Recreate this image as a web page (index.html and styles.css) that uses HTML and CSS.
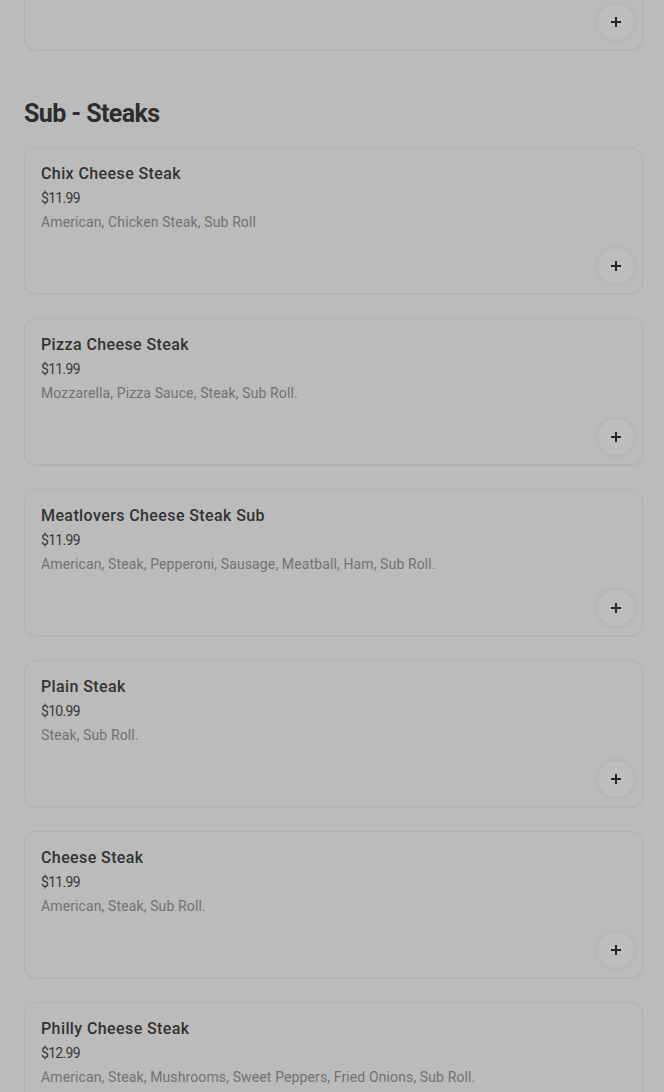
FILE: index.html
```html
<!DOCTYPE html>
<html lang="en">
  <head>
    <meta charset="UTF-8" />
    <meta name="viewport" content="width=device-width, initial-scale=1.0" />
    <title>Sub - Steaks</title>
    <link rel="stylesheet" href="styles.css">
  </head>
  <body>
    <div class="menu">
      <div class="item-list item-list-cut">
        <div class="item">
          <div class="item-text"></div>
          <div class="item-actions">
            <button class="add-btn" aria-label="Add">
              <svg viewBox="0 0 12 12" width="12" height="12"><path d="M6 1v10M1 6h10" /></svg>
            </button>
          </div>
        </div>
      </div>

      <h2 class="section-title">Sub - Steaks</h2>
      <div class="item-list">
        <div class="item">
          <div class="item-text">
            <h3 class="item-name">Chix Cheese Steak</h3>
            <p class="item-price">$11.99</p>
            <p class="item-desc">American, Chicken Steak, Sub Roll</p>
          </div>
          <div class="item-actions">
            <button class="add-btn" aria-label="Add">
              <svg viewBox="0 0 12 12" width="12" height="12"><path d="M6 1v10M1 6h10" /></svg>
            </button>
          </div>
        </div>
        <div class="item">
          <div class="item-text">
            <h3 class="item-name">Pizza Cheese Steak</h3>
            <p class="item-price">$11.99</p>
            <p class="item-desc">Mozzarella, Pizza Sauce, Steak, Sub Roll.</p>
          </div>
          <div class="item-actions">
            <button class="add-btn" aria-label="Add">
              <svg viewBox="0 0 12 12" width="12" height="12"><path d="M6 1v10M1 6h10" /></svg>
            </button>
          </div>
        </div>
        <div class="item">
          <div class="item-text">
            <h3 class="item-name">Meatlovers Cheese Steak Sub</h3>
            <p class="item-price">$11.99</p>
            <p class="item-desc">American, Steak, Pepperoni, Sausage, Meatball, Ham, Sub Roll.</p>
          </div>
          <div class="item-actions">
            <button class="add-btn" aria-label="Add">
              <svg viewBox="0 0 12 12" width="12" height="12"><path d="M6 1v10M1 6h10" /></svg>
            </button>
          </div>
        </div>
        <div class="item">
          <div class="item-text">
            <h3 class="item-name">Plain Steak</h3>
            <p class="item-price">$10.99</p>
            <p class="item-desc">Steak, Sub Roll.</p>
          </div>
          <div class="item-actions">
            <button class="add-btn" aria-label="Add">
              <svg viewBox="0 0 12 12" width="12" height="12"><path d="M6 1v10M1 6h10" /></svg>
            </button>
          </div>
        </div>
        <div class="item">
          <div class="item-text">
            <h3 class="item-name">Cheese Steak</h3>
            <p class="item-price">$11.99</p>
            <p class="item-desc">American, Steak, Sub Roll.</p>
          </div>
          <div class="item-actions">
            <button class="add-btn" aria-label="Add">
              <svg viewBox="0 0 12 12" width="12" height="12"><path d="M6 1v10M1 6h10" /></svg>
            </button>
          </div>
        </div>
        <div class="item">
          <div class="item-text">
            <h3 class="item-name">Philly Cheese Steak</h3>
            <p class="item-price">$12.99</p>
            <p class="item-desc">American, Steak, Mushrooms, Sweet Peppers, Fried Onions, Sub Roll.</p>
          </div>
          <div class="item-actions">
            <button class="add-btn" aria-label="Add">
              <svg viewBox="0 0 12 12" width="12" height="12"><path d="M6 1v10M1 6h10" /></svg>
            </button>
          </div>
        </div>
      </div>
    </div>
  </body>
</html>
```

FILE: styles.css
```css
* {
  margin: 0;
  padding: 0;
  box-sizing: border-box;
}
html,
body {
  height: 100%;
}
body {
  overflow: hidden;
  background: #bbbbbb;
  font-family: Roboto, "Liberation Sans", sans-serif;
  color: #333;
}
.menu {
  padding: 0 21px 0 24px;
}
.item-list {
  display: flex;
  flex-direction: column;
  gap: 24px;
}
.item-list-cut {
  margin-top: -97px;
}
.section-title {
  margin: 48px 0 17px;
  font-size: 25px;
  line-height: 32px;
  font-weight: 700;
  letter-spacing: -0.6px;
  color: #2d2d2d;
}
.item {
  display: flex;
  flex-direction: column;
  height: 147px;
  padding: 16px 8px 9px 16px;
  border: 1px solid #b1b1b1;
  border-radius: 12px;
  box-shadow: 0 1px 2px rgba(0, 0, 0, 0.05);
}
.item-text {
  display: flex;
  flex-direction: column;
  gap: 4px;
}
.item-name {
  font-size: 16px;
  line-height: 20px;
  font-weight: 500;
  letter-spacing: 0.4px;
  color: #333;
}
.item-price {
  font-size: 14px;
  line-height: 20px;
  letter-spacing: -0.7px;
  color: #383838;
}
.item-desc {
  font-size: 14px;
  line-height: 20px;
  letter-spacing: 0.12px;
  color: #727272;
}
.item-actions {
  display: flex;
  justify-content: flex-end;
  margin-top: auto;
}
.add-btn {
  display: flex;
  align-items: center;
  justify-content: center;
  width: 36px;
  height: 36px;
  border: 0;
  border-radius: 50%;
  background: #bebebe;
  box-shadow: 0 0 6px rgba(0, 0, 0, 0.07);
}
.add-btn path {
  stroke: #262626;
  stroke-width: 2;
  fill: none;
}
```
